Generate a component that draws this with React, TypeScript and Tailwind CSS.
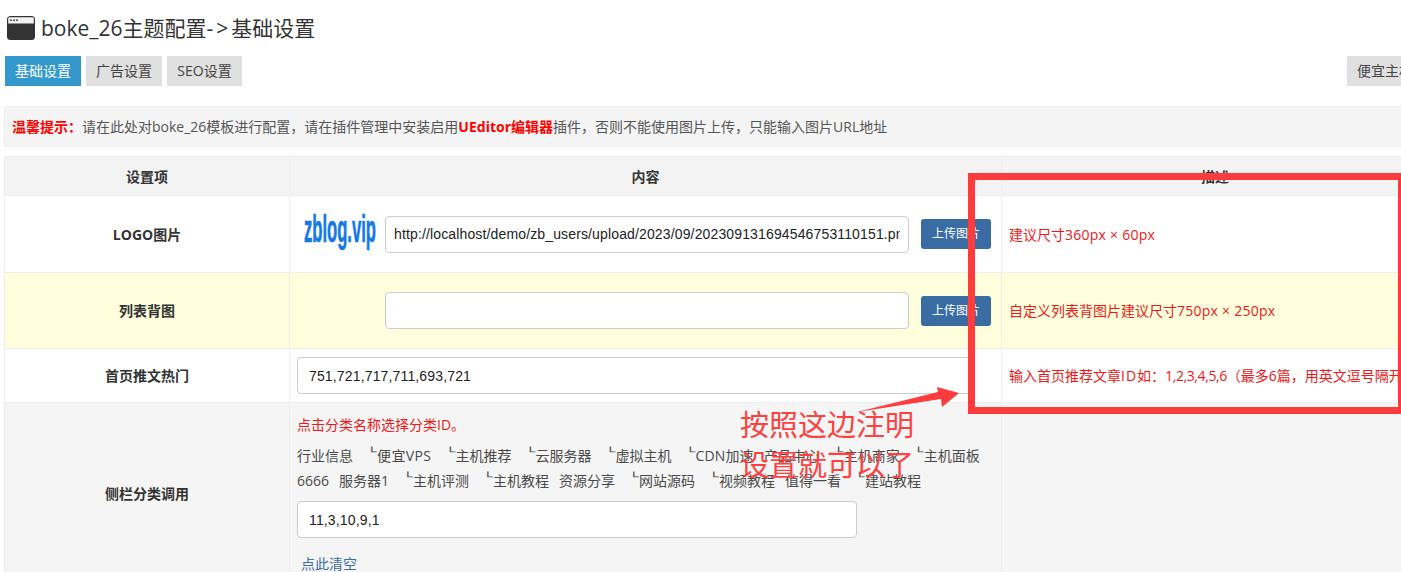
const Latin = ({ c }: { c: string }) => <span className="tracking-[0.25px]">{c}</span>;

const Cat = ({ t, sub = false, wide = 0 }: { t: string; sub?: boolean; wide?: number }) => (
  <span className={`inline-flex items-center whitespace-nowrap ${sub ? "ml-2" : ""} ${wide === 2 ? "tracking-[0.4px]" : wide === 1 ? "tracking-[0.15px]" : ""}`}>
    {sub && (
      <span className="inline-block w-[6px] h-[14px] overflow-visible">
        <span className="block font-['DejaVu_Sans'] text-[16px] leading-[16px] origin-top scale-y-[.55] -translate-x-[4px] -translate-y-[1px]">└</span>
      </span>
    )}
    {t}
  </span>
);

const line1: [string, boolean, number][] = [["行业信息", false, 0], ["便宜VPS", true, 2], ["主机推荐", true, 0], ["云服务器", true, 0], ["虚拟主机", true, 0], ["CDN加速", true, 1], ["产品中心", false, 0], ["主机商家", true, 0], ["主机面板", true, 0]];
const line2: [string, boolean, number][] = [["6666", false, 0], ["服务器1", false, 0], ["主机评测", true, 0], ["主机教程", true, 0], ["资源分享", false, 0], ["网站源码", true, 0], ["视频教程", true, 0], ["值得一看", false, 0], ["建站教程", true, 0]];

const Upload = () => (
  <button className="w-[70px] h-[30px] rounded-[3px] bg-[#386ca3] text-white text-[12px] shrink-0">上传图片</button>
);

export default function App() {
  return (
    <div className="relative w-[1401px] h-[572px] overflow-hidden bg-white text-[14px] text-[#333] font-['Open_Sans','Noto_Sans_CJK_SC',sans-serif]">
      <div className="flex items-center h-[56px] pl-[7px]">
        <svg width="28" height="24" viewBox="0 0 28 24" className="mr-[6px] shrink-0">
          <rect width="28" height="24" rx="3.5" fill="#333" />
          <path d="M2.5 1.2H25.5A1.3 1.3 0 0 1 26.8 2.5V7.5H1.2V2.5A1.3 1.3 0 0 1 2.5 1.2Z" fill="#f2f2f2" />
          <circle cx="4" cy="4.2" r="0.9" fill="#333" />
          <circle cx="7" cy="4.2" r="0.9" fill="#333" />
          <circle cx="10" cy="4.2" r="0.9" fill="#333" />
        </svg>
        <h1 className="text-[21px] font-normal leading-none text-[#333] pt-[1px]">boke_26主题配置<span className="tracking-[3px]">-&gt;</span>基础设置</h1>
      </div>

      <div className="flex w-[1418px] ml-[5px] gap-[5px] h-[30px] text-[14px] leading-[30px]">
        <a className="w-[76px] text-center bg-[#3399cc] text-white">基础设置</a>
        <a className="w-[76px] text-center bg-[#e0e0e0] text-[#444]">广告设置</a>
        <a className="w-[75px] text-center bg-[#e0e0e0] text-[#444]">SEO设置</a>
        <a className="w-[76px] ml-auto text-center bg-[#e0e0e0] text-[#444]">便宜主机</a>
      </div>

      <div className="mt-[20px] ml-[4px] w-[1700px] h-[41px] pl-[7px] flex items-center bg-[#f4f4f4] border border-[#eeeeee] rounded-[3px] text-[#555]">
        <b className="text-[#ff0000] font-bold">温馨提示：</b>
        <span>请在此处对boke_26模板进行配置，请在插件管理中安装启用</span>
        <b className="text-[#ff0000] font-bold">UEditor编辑器</b>
        <span>插件，否则不能使用图片上传，只能输入图片URL地址</span>
      </div>

      <table className="mt-[9px] ml-[4px] w-[1700px] table-fixed border-collapse">
        <colgroup>
          <col className="w-[285px]" />
          <col className="w-[712px]" />
          <col />
        </colgroup>
        <thead>
          <tr className="h-[39px] bg-[#f3f3f3] font-bold">
            <th className="border border-[#eeeeee] font-bold text-[#333]">设置项</th>
            <th className="border border-[#eeeeee] font-bold text-[#333]">内容</th>
            <th className="border border-[#eeeeee] font-bold text-[#333] text-left pl-[199px]">描述</th>
          </tr>
        </thead>
        <tbody>
          <tr className="h-[77px] bg-white">
            <td className="border border-[#eeeeee] text-center font-bold">LOGO图片</td>
            <td className="border border-[#eeeeee] pl-[7px]">
              <div className="flex items-center">
                <svg width="80" height="44" viewBox="0 0 80 44" className="shrink-0 ml-[6px] mr-[2px]">
                  <text x="1" y="30" textLength="72" lengthAdjust="spacingAndGlyphs" fontFamily="Liberation Sans" fontWeight="700" fontSize="38" fill="#1178e8" stroke="#1178e8" strokeWidth="0.6">zblog.vip</text>
                </svg>
                <input readOnly value="http://localhost/demo/zb_users/upload/2023/09/202309131694546753110151.png" className="w-[524px] h-[37px] px-[8px] border border-[#cccccc] rounded-[4px] font-['Liberation_Sans'] text-[14px] tracking-[0.14px] text-[#222] bg-white" />
                <span className="ml-[12px] flex"><Upload /></span>
              </div>
            </td>
            <td className="border border-[#eeeeee] pl-[7px] text-[#f01818]">建议尺寸<Latin c="360px × 60px" /></td>
          </tr>
          <tr className="h-[76px] bg-[#ffffdd]">
            <td className="border border-[#eeeeee] text-center font-bold">列表背图</td>
            <td className="border border-[#eeeeee] pl-[95px]">
              <div className="flex items-center">
                <input readOnly value="" className="w-[524px] h-[37px] px-[8px] border border-[#cccccc] rounded-[4px] bg-white" />
                <span className="ml-[12px] flex"><Upload /></span>
              </div>
            </td>
            <td className="border border-[#eeeeee] pl-[7px] text-[#f01818]">自定义列表背图片建议尺寸<Latin c="750px × 250px" /></td>
          </tr>
          <tr className="h-[54px] bg-white">
            <td className="border border-[#eeeeee] text-center font-bold">首页推文热门</td>
            <td className="border border-[#eeeeee] pl-[7px]">
              <input readOnly value="751,721,717,711,693,721" className="w-[675px] h-[37px] px-[11px] border border-[#cccccc] rounded-[4px] font-['Liberation_Sans'] text-[14px] tracking-[0.15px] text-[#222] bg-white" />
            </td>
            <td className="border border-[#eeeeee] pl-[7px] text-[#f01818] whitespace-nowrap">输入首页推荐文章<span className="tracking-[1px]">ID</span>如：<span className="tracking-[-0.4px]">1,2,3,4,5,6</span>（最多6篇，用英文逗号隔开）</td>
          </tr>
          <tr className="bg-[#f5f5f5] align-middle">
            <td className="border border-[#eeeeee] text-center font-bold">侧栏分类调用</td>
            <td className="border border-[#eeeeee] pl-[7px] pt-[12px] pb-[0px] align-top">
              <div className="text-[#f01818] text-[14px] leading-[20px]">点击分类名称选择分类ID。</div>
              <div className="flex gap-x-[10px] h-[25px] items-center mt-[8px] text-[#4a4a4a]">
                {line1.map(([t, s, w]) => <Cat key={t} t={t} sub={s} wide={w} />)}
              </div>
              <div className="flex gap-x-[10px] h-[25px] items-center text-[#4a4a4a]">
                {line2.map(([t, s, w]) => <Cat key={t} t={t} sub={s} wide={w} />)}
              </div>
              <input readOnly value="11,3,10,9,1" className="block mt-[8px] w-[560px] h-[37px] px-[11px] border border-[#cccccc] rounded-[4px] font-['Liberation_Sans'] text-[14px] tracking-[0.15px] text-[#222] bg-white" />
              <a className="block mt-[15px] ml-[4px] pb-[10px] text-[#3a6ea5]">点此清空</a>
            </td>
            <td className="border border-[#eeeeee]"></td>
          </tr>
        </tbody>
      </table>

      <div className="absolute left-[968px] top-[173px] w-[437px] h-[241px] border-[7px] border-[#ff3b3b]" />
      <svg className="absolute left-[850px] top-[380px]" width="115" height="40" viewBox="0 0 115 40">
        <polygon points="7,32 88,12 87,7 109,13 92,27 91,19" fill="#ff3b3b" />
      </svg>
      <div className="absolute left-[740px] top-[405px] text-[29px] leading-[40px] text-[#ff4040]">
        <div>按照这边注明</div>
        <div>设置就可以了</div>
      </div>
    </div>
  );
}
